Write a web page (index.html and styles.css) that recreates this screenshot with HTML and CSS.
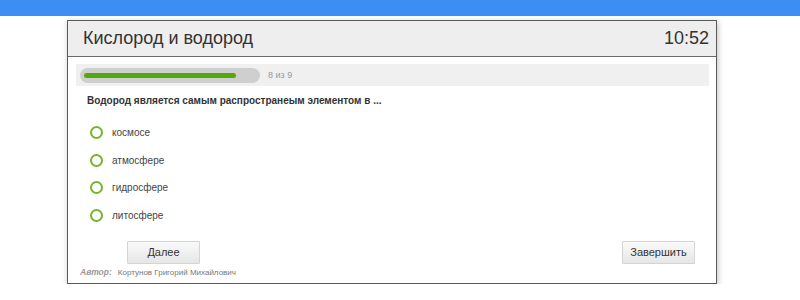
FILE: index.html
```html
<!DOCTYPE html>
<html lang="ru">
<head>
<meta charset="utf-8">
<link rel="stylesheet" href="styles.css">
</head>
<body>
<div class="topbar"></div>
<div class="card">
  <div class="header">
    <div class="title">Кислород и водород</div>
    <div class="time">10:52</div>
  </div>
  <div class="body">
    <div class="progress-band">
      <div class="pill"><div class="fill" style="width:152px"></div></div>
      <div class="count">8 из 9</div>
    </div>
    <div class="question">Водород является самым распространеым элементом в ...</div>
    <ul class="options">
      <li class="option"><span class="radio"></span><span>космосе</span></li>
      <li class="option"><span class="radio"></span><span>атмосфере</span></li>
      <li class="option"><span class="radio"></span><span>гидросфере</span></li>
      <li class="option"><span class="radio"></span><span>литосфере</span></li>
    </ul>
    <div class="buttons">
      <button class="btn next">Далее</button>
      <button class="btn finish">Завершить</button>
    </div>
    <div class="author"><span class="author-label">Автор:</span><span class="author-name">Кортунов Григорий Михайлович</span></div>
  </div>
</div>
</body>
</html>
```

FILE: styles.css
```css
html, body {
  margin: 0;
  padding: 0;
  background: #fff;
  font-family: "Liberation Sans", Arial, sans-serif;
}
.topbar {
  height: 16px;
  background: #3d8ef4;
}
.card {
  margin: 4px 0 0 67px;
  width: 648px;
  height: 262px;
  border: 1px solid #5a5a5a;
  box-shadow: 1px 2px 6px rgba(0,0,0,0.25);
  box-sizing: content-box;
  display: flex;
  flex-direction: column;
}
.header {
  height: 35px;
  background: #eeeeee;
  border-bottom: 1px solid #6a6a6a;
  display: flex;
  align-items: center;
  justify-content: space-between;
  padding: 0 7px 0 15px;
}
.title, .time {
  font-size: 18px;
  color: #333;
}
.body {
  padding: 7px 7px 0 8px;
  flex: 1;
  display: flex;
  flex-direction: column;
}
.progress-band {
  height: 22px;
  background: #f0f0f0;
  display: flex;
  align-items: center;
  padding-left: 4px;
}
.pill {
  width: 180px;
  height: 15px;
  border-radius: 8px;
  background: #cfcfcf;
  display: flex;
  align-items: center;
  padding-left: 4px;
  box-sizing: border-box;
}
.fill {
  height: 5px;
  border-radius: 3px;
  background: #54a80a;
}
.count {
  margin-left: 8px;
  font-size: 9px;
  color: #999;
}
.question {
  margin: 9px 0 0 11px;
  font-size: 10px;
  font-weight: bold;
  color: #333;
}
.options {
  list-style: none;
  margin: 20px 0 0 14px;
  padding: 0;
  display: flex;
  flex-direction: column;
  gap: 14.5px;
}
.option {
  display: flex;
  align-items: center;
  height: 13px;
  font-size: 10px;
  color: #444;
}
.radio {
  width: 13px;
  height: 13px;
  box-sizing: border-box;
  border: 2px solid #74b52b;
  border-radius: 50%;
  margin-right: 9px;
}
.buttons {
  display: flex;
  justify-content: space-between;
  margin: 19px 14px 0 51px;
}
.btn {
  width: 73px;
  height: 23px;
  border: 1px solid #d4d4d4;
  background: linear-gradient(#fafafa, #e6e6e6);
  font-family: "Liberation Sans", Arial, sans-serif;
  font-size: 11px;
  color: #333;
  padding: 0;
  border-radius: 1px;
}
.author {
  margin: 3px 0 0 4px;
  font-size: 8px;
  color: #777;
  display: flex;
  align-items: baseline;
}
.author-label {
  font-weight: bold;
  font-style: italic;
  font-size: 8.5px;
  color: #999;
  margin-right: 6px;
}
```
